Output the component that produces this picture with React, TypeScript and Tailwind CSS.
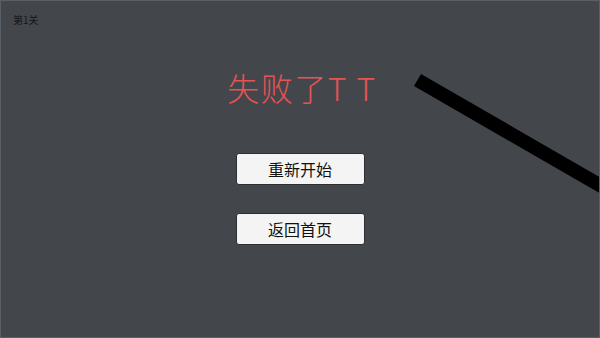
import React from "react";

export default function App() {
  const cjk = { fontFamily: '"Noto Sans CJK SC", "Noto Sans", sans-serif' };
  return (
    <div
      className="relative w-[600px] h-[338px] overflow-hidden bg-[#43464b] border border-[#5b5e63]"
      style={cjk}
    >
      <div className="absolute left-[12px] top-[12px] text-[10px] leading-[14px] text-[#161616]">第1关</div>
      <div className="flex flex-col items-center pt-[64px]">
        <div className="text-[32px] leading-[44px] text-[#e45454] font-light tracking-[1.5px] pl-[4px]">失败了T T</div>
        <div className="mt-[44px] flex flex-col items-center gap-[28px]">
          <button className="w-[129px] h-[32px] rounded-[3px] bg-[#f4f4f4] border border-[#2c2e31] text-[16px] text-[#111] flex items-center justify-center">
            重新开始
          </button>
          <button className="w-[129px] h-[32px] rounded-[3px] bg-[#f4f4f4] border border-[#2c2e31] text-[16px] text-[#111] flex items-center justify-center">
            返回首页
          </button>
        </div>
      </div>
      <svg className="absolute left-0 top-0" width="600" height="338" viewBox="0 0 600 338">
        <polygon points="420,73 413,85 673,235 680,223" fill="#000" />
      </svg>
    </div>
  );
}
